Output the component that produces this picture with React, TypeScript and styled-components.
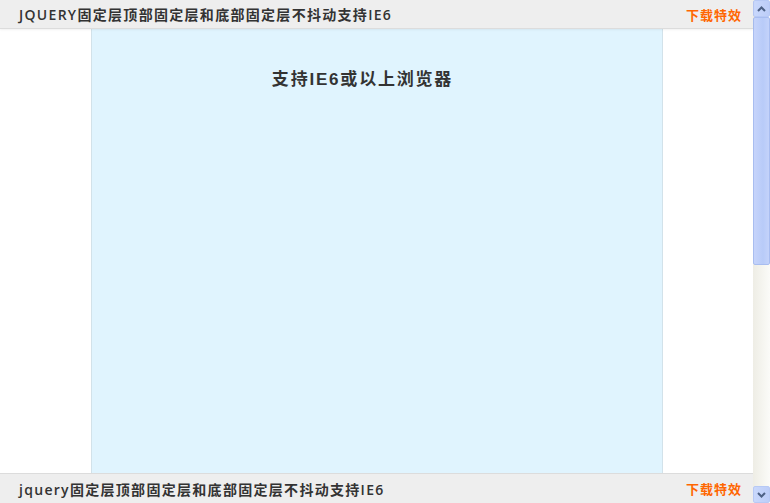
import React from 'react';
import styled, { createGlobalStyle } from 'styled-components';

const GlobalStyle = createGlobalStyle`
  html, body {
    margin: 0;
    padding: 0;
    height: 100%;
    overflow: hidden;
  }
  body {
    font-family: "Open Sans", "Noto Sans CJK SC", sans-serif;
    color: #333;
  }
`;

const Page = styled.div`
  display: flex;
  width: 100vw;
  height: 100vh;
`;

const Main = styled.div`
  flex: 1;
  display: flex;
  flex-direction: column;
  min-width: 0;
  background: #fff;
`;

const Bar = styled.div<{ $top?: boolean }>`
  height: ${(p) => (p.$top ? '28px' : '29px')};
  flex-shrink: 0;
  display: flex;
  align-items: center;
  justify-content: space-between;
  padding: 0 11px 0 19px;
  background: #eeeeee;
  ${(p) =>
    p.$top
      ? 'border-bottom: 1px solid #dcdcdc; box-shadow: 0 1px 2px rgba(0,0,0,0.06);'
      : 'border-top: 1px solid #dcdcdc;'}
  position: relative;
  z-index: 1;
`;

const BarTitle = styled.span`
  font-size: 14px;
  font-weight: 600;
  letter-spacing: 1.3px;
  color: #333;
  white-space: nowrap;
`;

const Download = styled.a`
  font-family: "Noto Sans CJK SC", sans-serif;
  font-size: 13px;
  font-weight: 700;
  letter-spacing: 1px;
  color: #ff6600;
  text-decoration: none;
`;

const Body = styled.div`
  flex: 1;
  display: flex;
  justify-content: center;
  overflow: hidden;
`;

const Container = styled.div`
  width: 570px;
  background: #e0f4fe;
  border-left: 1px solid #d2e2ea;
  border-right: 1px solid #d2e2ea;
  text-align: center;
`;

const Heading = styled.h2`
  margin: 40px 0 0;
  padding-right: 28px;
  font-family: "Liberation Sans", "Noto Sans CJK SC", sans-serif;
  font-size: 17px;
  font-weight: 700;
  letter-spacing: 1.8px;
  line-height: 22px;
  color: #333;
`;

const Scrollbar = styled.div`
  width: 17px;
  flex-shrink: 0;
  display: flex;
  flex-direction: column;
  background: linear-gradient(to right, #eeede5, #fbfbf8);
`;

const ArrowButton = styled.div`
  height: 17px;
  flex-shrink: 0;
  box-sizing: border-box;
  border: 1px solid #b7c9f5;
  border-radius: 2px;
  background: linear-gradient(to right, #c9d8fc, #bccdf8);
  display: flex;
  align-items: center;
  justify-content: center;
`;

const Thumb = styled.div`
  height: 248px;
  flex-shrink: 0;
  box-sizing: border-box;
  border: 1px solid #a8bdf0;
  border-radius: 2px;
  background: linear-gradient(to right, #c6d4fb, #b8cbf8 60%, #c4d3fa);
`;

const Track = styled.div`
  flex: 1;
`;

const Chevron = ({ down }: { down?: boolean }) => (
  <svg width="9" height="6" viewBox="0 0 9 6">
    <path
      d={down ? 'M1 1 L4.5 4.5 L8 1' : 'M1 5 L4.5 1.5 L8 5'}
      stroke="#4d6185"
      strokeWidth="2"
      fill="none"
    />
  </svg>
);

export default function App() {
  return (
    <>
      <GlobalStyle />
      <Page>
        <Main>
          <Bar $top>
            <BarTitle>JQUERY固定层顶部固定层和底部固定层不抖动支持IE6</BarTitle>
            <Download href="#">下载特效</Download>
          </Bar>
          <Body>
            <Container>
              <Heading>支持IE6或以上浏览器</Heading>
            </Container>
          </Body>
          <Bar>
            <BarTitle>jquery固定层顶部固定层和底部固定层不抖动支持IE6</BarTitle>
            <Download href="#">下载特效</Download>
          </Bar>
        </Main>
        <Scrollbar>
          <ArrowButton>
            <Chevron />
          </ArrowButton>
          <Thumb />
          <Track />
          <ArrowButton>
            <Chevron down />
          </ArrowButton>
        </Scrollbar>
      </Page>
    </>
  );
}
